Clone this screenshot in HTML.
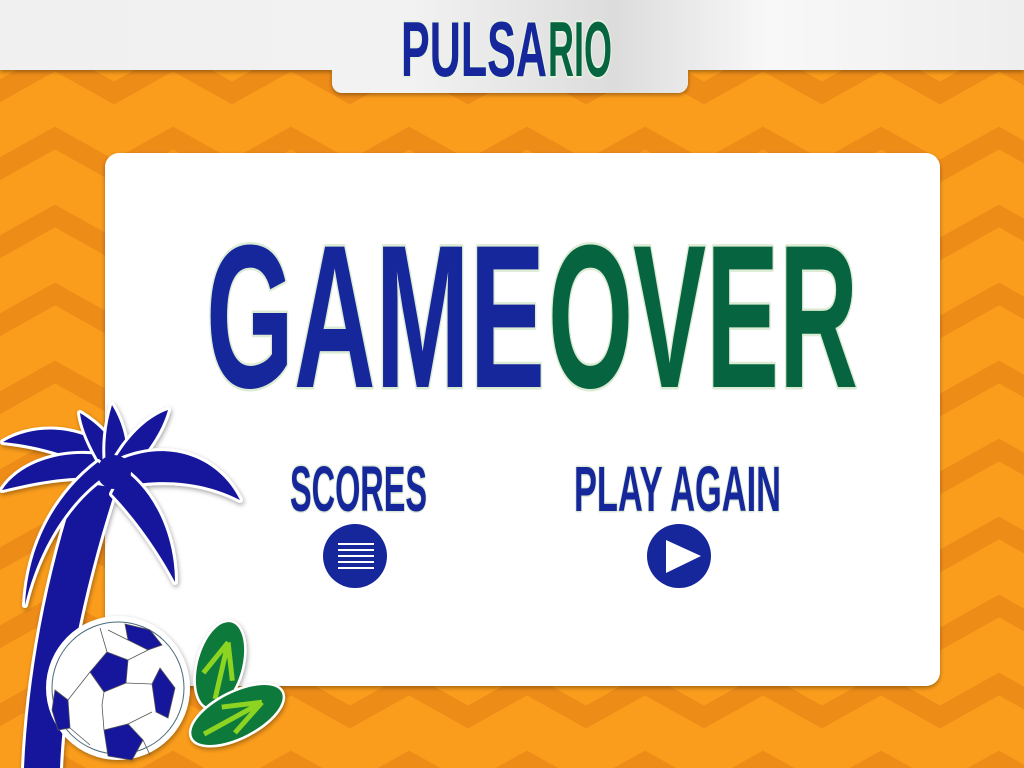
<!DOCTYPE html>
<html><head><meta charset="utf-8"><style>
html,body{margin:0;padding:0;width:1024px;height:768px;overflow:hidden;background:#fb9d1c}
svg{display:block}
</style></head><body>
<svg width="1024" height="768" viewBox="0 0 1024 768" xmlns="http://www.w3.org/2000/svg">
<defs>
<pattern id="zz" x="-4" y="20" width="118" height="78" patternUnits="userSpaceOnUse">
<polyline points="-59,40 0,73 59,40 118,73 177,40" fill="none" stroke="#ee8c18" stroke-width="20"/>
<polyline points="-59,-38 0,-5 59,-38 118,-5 177,-38" fill="none" stroke="#ee8c18" stroke-width="20"/>
</pattern>
<linearGradient id="bar" x1="0" x2="1" y1="0" y2="0">
<stop offset="0" stop-color="#f0f0f0"/><stop offset="0.4" stop-color="#f2f2f2"/><stop offset="0.6" stop-color="#dcdcdc"/><stop offset="0.75" stop-color="#f8f8f8"/><stop offset="1" stop-color="#eeeeee"/></linearGradient>
<filter id="sh" x="-10%" y="-10%" width="120%" height="130%"><feDropShadow dx="0" dy="2" stdDeviation="2" flood-color="#000" flood-opacity="0.35"/></filter>
<filter id="sh2" x="-20%" y="-20%" width="140%" height="140%"><feDropShadow dx="1" dy="2" stdDeviation="2.5" flood-color="#000" flood-opacity="0.35"/></filter>
</defs>
<rect width="1024" height="768" fill="#fb9d1c"/>
<rect width="1024" height="768" fill="url(#zz)"/>
<g filter="url(#sh)">
<path d="M0 0H1024V70H688V83a10 10 0 0 1-10 10H342a10 10 0 0 1-10-10V70H0Z" fill="url(#bar)"/>
</g>
<g font-family="Liberation Sans, sans-serif" font-weight="bold" stroke="#e6f2e0" stroke-width="4" paint-order="stroke" stroke-linejoin="round">
<text x="401" y="76" font-size="78" fill="#16269b" textLength="146" lengthAdjust="spacingAndGlyphs">PULSA</text>
<text x="548" y="76" font-size="78" fill="#066440" textLength="64" lengthAdjust="spacingAndGlyphs">RIO</text>
</g>
<rect x="105" y="153" width="835" height="533" rx="14" fill="#fff" filter="url(#sh)"/>
<g font-family="Liberation Sans, sans-serif" font-weight="bold" stroke="#dcebd4" stroke-width="5" paint-order="stroke" stroke-linejoin="round">
<text x="206" y="387" font-size="204" fill="#16269b" textLength="339" lengthAdjust="spacingAndGlyphs">GAME</text>
<text x="548" y="387" font-size="204" fill="#066440" textLength="310" lengthAdjust="spacingAndGlyphs">OVER</text>
<text x="290" y="511" font-size="64" fill="#16269b" stroke-width="3" textLength="137" lengthAdjust="spacingAndGlyphs">SCORES</text>
<text x="574" y="511" font-size="64" fill="#16269b" stroke-width="3" textLength="207" lengthAdjust="spacingAndGlyphs">PLAY AGAIN</text>
</g>
<circle cx="355" cy="556" r="32" fill="#16269b"/>
<g stroke="#fff" stroke-width="2"><line x1="338" y1="544" x2="374" y2="544"/><line x1="338" y1="550" x2="374" y2="550"/><line x1="338" y1="556" x2="374" y2="556"/><line x1="338" y1="562" x2="374" y2="562"/><line x1="338" y1="568" x2="374" y2="568"/></g>
<circle cx="679" cy="556" r="32" fill="#16269b"/>
<path d="M666 540L701 556L666 573Z" fill="#fff"/>
<g filter="url(#sh2)">
<g fill="#16169c" stroke="#fff" stroke-width="6" stroke-linejoin="round" paint-order="stroke">
<path d="M24 768C28 680 45 580 78 482L116 488C86 580 64 680 60 768Z"/>
<path d="M112 480C80 456 40 446 3 442C40 420 90 428 120 458Z"/>
<path d="M108 478C60 475 25 485 2 490C25 455 80 448 112 458Z"/>
<path d="M104 470C92 450 82 430 80 413C100 425 116 442 122 462Z"/>
<path d="M106 465C104 445 106 425 112 405C124 425 128 445 126 465Z"/>
<path d="M112 465C125 440 145 418 168 410C162 432 146 455 128 472Z"/>
<path d="M116 462C165 438 218 455 240 500C205 482 165 478 124 486Z"/>
<path d="M124 470C158 495 175 540 175 582C158 550 135 518 112 494Z"/>
<path d="M108 474C68 500 38 550 25 605C28 545 55 495 98 462Z"/>
</g>
<circle cx="114" cy="472" r="17" fill="#16169c"/>
<circle cx="118" cy="688" r="72" fill="#fff"/>
<circle cx="118" cy="688" r="66" fill="#fff" stroke="#4a6a7a" stroke-width="1"/>
<g fill="#16169c" stroke="#555" stroke-width="0.8">
<path d="M107 652L128 660L126 683L104 692L90 672Z"/>
<path d="M160 668L175 688L168 718L156 712L152 684Z"/>
<path d="M104 730L128 724L143 740L132 760L108 756Z"/>
<path d="M125 624L150 630L162 645L148 650L128 640Z"/>
<path d="M55 690L68 700L70 728L58 730L52 710Z"/>
</g>
<g stroke="#555" stroke-width="0.8" fill="none">
<path d="M128 660L148 650M126 683L152 684M104 692L102 705L104 730M128 724L152 712M90 672L68 700M107 652L100 628M143 740L150 755M70 728L90 745M128 640L108 630"/>
</g>
<g stroke="#fff" stroke-width="5" paint-order="stroke">
<g transform="translate(220,665) rotate(105)">
<ellipse cx="0" cy="0" rx="44" ry="22" fill="#0f7a3a"/>
<path d="M-24 -2L12 -16M-24 -2L12 14M-24 -2L34 -4" stroke="#8cd321" stroke-width="5" fill="none" paint-order="normal"/>
</g>
<g transform="translate(237,715) rotate(153)">
<ellipse cx="0" cy="0" rx="50" ry="22" fill="#0f7a3a"/>
<path d="M-28 0L10 -15M-28 0L10 14M-28 0L38 -2" stroke="#8cd321" stroke-width="5" fill="none" paint-order="normal"/>
</g>
</g>
</g>
</svg>
</body></html>
